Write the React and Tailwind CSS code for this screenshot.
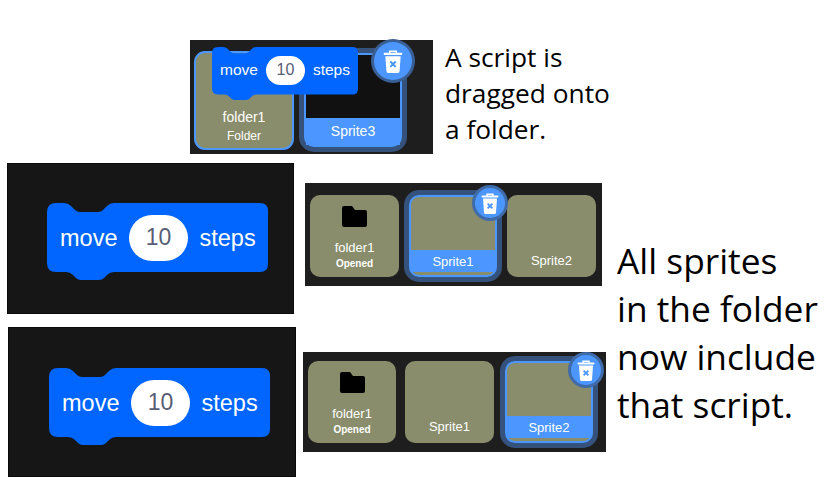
// Collage: scripts dragged onto a sprite folder
const SANS = "font-['Liberation_Sans',Arial,sans-serif]";
const NOTE = "font-['Open_Sans',sans-serif]";

function ScriptBlock({ large }) {
  return (
    <div className={`relative ${SANS} ${large ? 'w-[221px] h-[77px]' : 'w-[146px] h-[53px]'}`}>
      <svg className="absolute inset-0 w-full h-full" viewBox="0 0 221 77" preserveAspectRatio="none">
        <path
          fill="#0066ff"
          d="M0 9Q0 0 9 0H17Q21 0 24 3L28 7Q30 9 33 9H51Q54 9 56 7L60 3Q63 0 67 0H213Q221 0 221 8V61Q221 69 213 69H67Q63 69 60 72L57 75Q55 77 52 77H34Q31 77 29 75L26 72Q23 69 19 69H9Q0 69 0 60Z"
        />
      </svg>
      <div className={`relative flex items-center text-white ${large ? 'h-[69px] pl-[13px] gap-[11.5px] text-[23.5px]' : 'h-[46px] pl-[8px] gap-[8px] text-[15.5px]'}`}>
        <span className={large ? 'mt-[2px]' : ''}>move</span>
        <span className={`flex items-center justify-center rounded-full bg-white text-[#575e75] ${large ? 'w-[59px] h-[46px] text-[23px]' : 'w-[39px] h-[29px] text-[16px]'}`}>10</span>
        <span className={large ? 'mt-[2px]' : ''}>steps</span>
      </div>
    </div>
  );
}

function BlockPanel({ className }) {
  return (
    <div className={`flex flex-col bg-[#161616] border border-[#0a0a0a] ${className}`}>
      <ScriptBlock large />
    </div>
  );
}

function TrashBadge({ className, big }) {
  return (
    <div className={`absolute flex items-center justify-center rounded-full bg-[#4c97ff] ${big ? 'w-[38px] h-[38px] shadow-[0_0_0_3px_#3a5f94]' : 'w-[30px] h-[30px] shadow-[0_0_0_3px_#3f6ba8]'} ${className}`}>
      <svg className={big ? 'w-[20px] h-[23px]' : 'w-[18px] h-[21px]'} viewBox="0 0 18 21">
        <path fill="none" stroke="#fff" strokeWidth="1.4" d="M6 3V1.2H12V3" />
        <rect x="0.5" y="2.4" width="17" height="2.2" rx="1" fill="#fff" />
        <path fill="#fff" d="M2 5.6H16L15 19.4Q14.9 21 13.4 21H4.6Q3.1 21 3 19.4Z" />
        <path stroke="#4c97ff" strokeWidth="1.9" d="M6.6 10.6L11.4 15.4M11.4 10.6L6.6 15.4" />
      </svg>
    </div>
  );
}

function FolderCard({ className, sub }) {
  return (
    <div className={`h-[82px] shrink-0 flex flex-col items-center rounded-[10px] bg-[#898d6b] text-white ${SANS} ${className}`}>
      <svg className="mt-[11px] w-[25px] h-[21px]" viewBox="0 0 25 21">
        <path d="M2 0H10L13 4H23Q25 4 25 6V19Q25 21 23 21H2Q0 21 0 19V2Q0 0 2 0Z" fill="#000" />
      </svg>
      <span className="mt-[13px] text-[13px] leading-[16px]">folder1</span>
      <span className="mt-[1px] text-[10px] leading-[13px] font-bold">{sub}</span>
    </div>
  );
}

function SpriteCard({ name, className }) {
  return (
    <div className={`h-[82px] shrink-0 flex items-end justify-center pb-[8px] rounded-[10px] bg-[#898d6b] text-white text-[13px] leading-[16px] ${SANS} ${className}`}>
      {name}
    </div>
  );
}

function SelectedCard({ name, className }) {
  return (
    <div className={`relative h-[82px] shrink-0 flex flex-col justify-end pb-[3px] rounded-[10px] border-2 border-[#4c97ff] bg-[#898d6b] shadow-[0_0_0_5px_#34527c] ${SANS} ${className}`}>
      <div className="h-[22px] pt-[1px] flex items-center justify-center bg-[#4c97ff] text-white text-[13px]">{name}</div>
    </div>
  );
}

export default function App() {
  return (
    <div className="w-[840px] h-[481px] overflow-hidden bg-white text-black">
      {/* top: dragging */}
      <div className="flex pl-[190px] pt-[40px]">
        <div className={`relative w-[243px] h-[114px] flex items-start gap-[10px] pl-[4px] pt-[11px] bg-[#1e1e1e] ${SANS}`}>
          <div className="w-[100px] h-[99px] shrink-0 flex flex-col items-center justify-end pb-[5px] rounded-[11px] border-2 border-[#4c97ff] bg-[#898d6b] text-white">
            <span className="text-[14px] leading-[18px]">folder1</span>
            <span className="mt-[3px] text-[12px] leading-[14px]">Folder</span>
          </div>
          <div className="mt-[2px] w-[98px] h-[94px] shrink-0 flex flex-col justify-end rounded-[10px] border-2 border-[#4c97ff] bg-[#111111] shadow-[0_0_0_5px_#34527c]">
            <div className="h-[27px] flex items-center justify-center bg-[#4c97ff] text-white text-[14px]">Sprite3</div>
          </div>
          <div className="absolute left-[22px] top-[7px]">
            <ScriptBlock />
          </div>
          <TrashBadge big className="left-[184px] top-[2px]" />
        </div>
        <p className={`ml-[12px] -mt-[1px] text-[26.3px] leading-[36px] ${NOTE}`}>
          A script is<br />dragged onto<br />a folder.
        </p>
      </div>

      <div className="flex pl-[7px] pt-[9px]">
        {/* blocks */}
        <div className="flex flex-col shrink-0 w-[289px]">
          <BlockPanel className="w-[287px] h-[151px] pt-[39px] pl-[39px]" />
          <BlockPanel className="ml-[1px] mt-[13px] w-[288px] h-[150px] pt-[40px] pl-[40px]" />
        </div>

        {/* sprite panes */}
        <div className="flex flex-col shrink-0 w-[303px] ml-[7px]">
          <div className="relative ml-[2px] mt-[20px] w-[297px] h-[103px] flex pl-[5px] pt-[12px] bg-[#1e1e1e]">
            <FolderCard className="w-[89px]" sub="Opened" />
            <SelectedCard name="Sprite1" className="ml-[10px] w-[88px]" />
            <SpriteCard name="Sprite2" className="ml-[10px] w-[89px]" />
            <TrashBadge className="left-[170px] top-[5px]" />
          </div>
          <div className="relative mt-[66px] w-[303px] h-[100px] flex pl-[5px] pt-[9px] bg-[#1e1e1e]">
            <FolderCard className="w-[88px]" sub="Opened" />
            <SpriteCard name="Sprite1" className="ml-[9px] w-[89px]" />
            <SelectedCard name="Sprite2" className="ml-[11px] w-[88px]" />
            <TrashBadge className="left-[268px] top-[3px]" />
          </div>
        </div>

        <p className={`ml-[11px] mt-[73px] text-[35.3px] leading-[48px] whitespace-nowrap ${NOTE}`}>
          All sprites<br />in the folder<br />now include<br />that script.
        </p>
      </div>
    </div>
  );
}
